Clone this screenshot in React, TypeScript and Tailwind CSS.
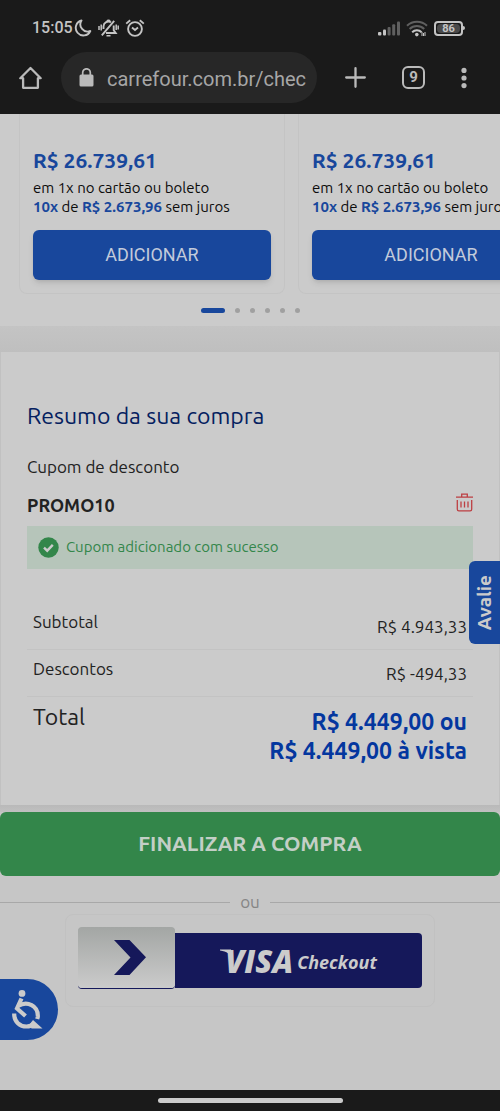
import clsx from "clsx";

const offers = [
  { id: 1, price: "R$ 26.739,61", installment: "R$ 2.673,96" },
  { id: 2, price: "R$ 26.739,61", installment: "R$ 2.673,96" },
];

const summary = [
  { label: "Subtotal", value: "R$ 4.943,33" },
  { label: "Descontos", value: "R$ -494,33" },
];

function StatusBar() {
  return (
    <div className="flex h-[52px] items-center justify-between pt-1 pr-[35px] pl-8 text-[#c4c4c4]">
      <div className="flex items-center">
        <span className="w-[42px] font-['Roboto',sans-serif] text-base font-medium">
          15:05
        </span>
        <svg width="18" height="18" viewBox="0 0 18 18" fill="none" stroke="currentColor" strokeWidth="1.9" strokeLinejoin="round">
          <path d="M7.5 1.5A7.6 7.6 0 1 0 16.3 12 7.2 7.2 0 0 1 7.5 1.5z" />
        </svg>
        <svg className="ml-1.5" width="21" height="18" viewBox="0 0 21 18" fill="none" stroke="currentColor" strokeWidth="1.9">
          <path d="M5.5 10V7.2A5 5 0 0 1 13 3.2M15.7 6.5v4.7l2 2.8H8" />
          <path d="M9.2 2.4a1.4 1.4 0 0 1 2.6 0M3.8 16.4L16.2 1.8" />
          <path d="M8.5 16.8h4M1 7v4M3.2 5.5v6M18.2 5.5v5.5M20.2 6.5v4" strokeWidth="1.5" />
        </svg>
        <svg className="ml-[6px]" width="20" height="18" viewBox="0 0 20 18" fill="none" stroke="currentColor" strokeWidth="1.9">
          <circle cx="10" cy="10" r="6.9" />
          <path d="M1.2 4.6L5.2 1.2M18.8 4.6l-4-3.4M7 8.6l3 2.4 3-2.4" />
        </svg>
      </div>
      <div className="flex items-center">
        <svg width="23" height="15" viewBox="0 0 23 15">
          <g fill="#c4c4c4">
            <rect x="0" y="11" width="3.4" height="3.4" rx="1" />
            <rect x="5" y="8.6" width="3" height="5.8" rx="1" />
          </g>
          <g fill="#606060">
            <rect x="9.6" y="6" width="3" height="8.4" rx="1" />
            <rect x="14.2" y="3.2" width="3" height="11.2" rx="1" />
            <rect x="19" y="0.4" width="3" height="14" rx="1" />
          </g>
        </svg>
        <svg className="ml-[5px]" width="22" height="17" viewBox="0 0 22 17" fill="none" strokeWidth="2">
          <g stroke="#606060">
            <path d="M1 5.8a14.4 14.4 0 0 1 20 0" />
            <path d="M3.6 9a10.4 10.4 0 0 1 14.6 0" />
          </g>
          <path d="M6.2 12.2a6.6 6.6 0 0 1 9.4 0" stroke="#c4c4c4" />
          <circle cx="10.8" cy="14.6" r="1.8" fill="#c4c4c4" />
          <path d="M16 12v4M19 12v4M17.5 13v3" stroke="#c4c4c4" strokeWidth="1" />
        </svg>
        <span className="ml-[6px] flex h-[15px] w-[29px] items-center justify-center rounded border-2 border-[#c4c4c4] p-px">
          <span className="w-full rounded-sm bg-[#4a4a4a] text-center font-['Roboto',sans-serif] text-[11px] leading-[9px] font-bold">
            86
          </span>
        </span>
        <span className="h-1 w-0.5 rounded-r bg-[#c4c4c4]" />
      </div>
    </div>
  );
}

function AddressBar() {
  return (
    <div className="flex items-center pr-[33px] pb-[11px] pl-[19px] text-[#bababa]">
      <button type="button" aria-label="Página inicial">
        <svg width="23" height="24" viewBox="0 0 23 24" fill="none" stroke="currentColor" strokeWidth="2.3" strokeLinejoin="round">
          <path d="M11.5 2L1.3 12.2h2.8v9.6h14.8v-9.6h2.8z" />
        </svg>
      </button>
      <div className="ml-[19px] flex h-[51px] min-w-0 flex-1 items-center rounded-full bg-[#272727] pr-[11px] pl-[18px]">
        <svg className="shrink-0" width="15" height="19" viewBox="0 0 15 19" fill="none">
          <rect x="0.5" y="6.5" width="14" height="12" rx="1.5" fill="#bababa" />
          <path d="M3.7 7V4.6a3.8 3.8 0 0 1 7.6 0V7" stroke="#bababa" strokeWidth="1.7" />
        </svg>
        <input
          type="text"
          aria-label="Endereço"
          defaultValue="carrefour.com.br/checkout"
          className="ml-[13px] min-w-0 flex-1 bg-transparent pt-0.5 font-['Roboto',sans-serif] text-xl text-[#a6a6a6] outline-none"
        />
      </div>
      <button type="button" aria-label="Nova aba" className="ml-7">
        <svg width="21" height="21" viewBox="0 0 21 21" stroke="currentColor" strokeWidth="2.3" strokeLinecap="round">
          <path d="M10.5 1.2v18.6M1.2 10.5h18.6" />
        </svg>
      </button>
      <button
        type="button"
        aria-label="9 abas"
        className="ml-9 h-[23px] w-[23px] rounded-md border-2 border-[#bababa] font-['Roboto',sans-serif] text-[15px] leading-[19px] font-bold"
      >
        9
      </button>
      <button type="button" aria-label="Menu" className="ml-9">
        <svg width="6" height="22" viewBox="0 0 6 22" fill="currentColor">
          <circle cx="3" cy="3.4" r="2.6" />
          <circle cx="3" cy="11" r="2.6" />
          <circle cx="3" cy="18.6" r="2.6" />
        </svg>
      </button>
    </div>
  );
}

function Offers() {
  return (
    <section className="bg-[#cbcbcb] pb-[13px]">
      <div className="flex gap-[13px] overflow-hidden pl-[19px]">
        {offers.map((offer) => (
          <article
            key={offer.id}
            className="w-[266px] shrink-0 rounded-b-lg border border-t-0 border-[#c4c4c4] px-[13px] pt-8 pb-[13px] whitespace-nowrap"
          >
            <p className="text-[21px] leading-7 font-bold text-[#18479c]">
              {offer.price}
            </p>
            <p className="mt-1 text-[15px] leading-[19px] text-[#0c0c0c]">
              em 1x no cartão ou boleto
            </p>
            <p className="text-[15px] leading-[19px] text-[#0c0c0c]">
              <b className="font-bold text-[#18479c]">10x</b> de{" "}
              <b className="font-bold text-[#18479c]">{offer.installment}</b>{" "}
              sem juros
            </p>
            <button
              type="button"
              className="mt-3.5 h-[50px] w-full rounded-md bg-[#18479c] font-['Roboto',sans-serif] text-lg text-[#c3cbdb] shadow-md"
            >
              ADICIONAR
            </button>
          </article>
        ))}
      </div>
      <div className="mt-3.5 flex items-center justify-center gap-2.5">
        {[0, 1, 2, 3, 4, 5].map((page) => (
          <button
            key={page}
            type="button"
            aria-label={`Página ${page + 1}`}
            className={clsx(
              "h-[5px] rounded-full",
              page === 0 ? "w-6 bg-[#18479c]" : "w-[5px] bg-[#a0a0a0]"
            )}
          />
        ))}
      </div>
    </section>
  );
}

function Summary() {
  return (
    <section className="border-x border-[#c1c1c1] bg-[#cbcbcb] px-[26px] pt-12 pb-10 text-[#222]">
      <h2 className="text-[23px] leading-8 text-[#04205f]">
        Resumo da sua compra
      </h2>
      <p className="mt-[23px] text-[17px] leading-6">Cupom de desconto</p>
      <div className="mt-2.5 flex items-start justify-between">
        <strong className="pt-1 text-lg leading-6 font-bold">PROMO10</strong>
        <button type="button" aria-label="Remover cupom" className="pt-1">
          <svg width="17" height="19" viewBox="0 0 17 19" fill="none" stroke="#bd3f43" strokeWidth="1.3">
            <path d="M0 4.2h17M5.7 4V1.2h5.6V4M1.3 7v9.2a1.6 1.6 0 0 0 1.6 1.6h11.2a1.6 1.6 0 0 0 1.6-1.6V7" />
            <path d="M5 8.5v6M8.5 8.5v6M12 8.5v6" />
          </svg>
        </button>
      </div>
      <p className="mt-[9px] flex h-[43px] items-center gap-[7px] bg-[#b6c5ba] pl-[11px] text-[15px] text-[#33864a]">
        <svg width="21" height="21" viewBox="0 0 21 21">
          <circle cx="10.5" cy="10.5" r="10.2" fill="#33864a" />
          <path d="M6 10.7l3.2 3 5.6-5.8" fill="none" stroke="#cbcbcb" strokeWidth="2.4" />
        </svg>
        Cupom adicionado com sucesso
      </p>
      <table className="mt-[34px] w-full">
        <tbody>
          {summary.map((row) => (
            <tr key={row.label} className="border-b border-[#c3c3c3]">
              <th scope="row" className="px-1.5 pt-[7px] pb-3 text-left align-top text-[17px] leading-6 font-normal">
                {row.label}
              </th>
              <td className="px-1.5 pt-3 pb-2.5 text-right text-[17px] leading-6">
                {row.value}
              </td>
            </tr>
          ))}
          <tr>
            <th scope="row" className="px-1.5 pt-1 text-left align-top text-[23px] leading-8 font-normal">
              Total
            </th>
            <td className="px-1.5 pt-2.5 text-right text-[23px] leading-[29px] font-bold text-[#04379f]">
              R$ 4.449,00 ou
              <br />
              R$ 4.449,00 à vista
            </td>
          </tr>
        </tbody>
      </table>
    </section>
  );
}

function VisaCheckout() {
  return (
    <div className="mx-[65px] rounded-lg border border-[#c1c1c1] px-3 pt-3 pb-[18px]">
      <button
        type="button"
        aria-label="Visa Checkout"
        className="flex w-full items-end text-[#cbcbcb]"
      >
        <span className="z-10 flex h-[61px] w-[97px] items-center justify-center rounded bg-linear-to-b from-[#a3a6a4] to-[#cbcbcb] pl-1.5 shadow-[0_1px_0_#15185a]">
          <svg width="32" height="35" viewBox="0 0 32 35" fill="#15185a">
            <path d="M0 0h15.5L32 17.2 15.5 35H0l16.5-17.5z" />
          </svg>
        </span>
        <span className="flex h-[55px] flex-1 items-center justify-center rounded-r bg-[#15185a]">
          <svg width="13" height="23" viewBox="0 0 13 23" fill="#cbcbcb">
            <path d="M0 .5h11l2 9C10 5 7 2.5 0 1.5z" />
          </svg>
          <span className="-ml-2 font-['Open_Sans',sans-serif] text-[31px] leading-8 font-extrabold italic">
            VISA
          </span>
          <span className="ml-1 pt-0.5 font-['Open_Sans',sans-serif] text-lg leading-6 font-bold italic">
            Checkout
          </span>
        </span>
      </button>
    </div>
  );
}

export default function App() {
  return (
    <div className="relative flex min-h-screen flex-col overflow-hidden bg-[#c6c6c6] font-['Ubuntu','Noto_Sans',sans-serif]">
      <header className="bg-[#1a1a1a]">
        <StatusBar />
        <AddressBar />
      </header>
      <main className="flex-1">
        <Offers />
        <div className="h-[26px] bg-linear-to-b from-[#c4c4c4] to-[#bfbfbf]" />
        <Summary />
        <div className="h-[7px] bg-linear-to-b from-[#b9b9b9] to-[#c0c0c0]" />
        <button
          type="button"
          className="h-16 w-full rounded-md bg-[#33864a] text-[21px] font-bold text-[#c3cfc6]"
        >
          FINALIZAR A COMPRA
        </button>
        <div className="flex h-[38px] items-center gap-2.5 pt-3.5 text-[17px] leading-6 text-[#858585]">
          <span className="h-px flex-1 bg-[#a8a8a8]" />
          ou
          <span className="h-px flex-1 bg-[#a8a8a8]" />
        </div>
        <VisaCheckout />
      </main>
      <footer className="flex h-[21px] items-center justify-center bg-[#1a1a1a]">
        <span className="h-[5px] w-[185px] rounded-full bg-[#cbcbcb]" />
      </footer>

      <button
        type="button"
        className="absolute top-[561px] right-0 flex h-[83px] w-[31px] items-center justify-center rounded-l-md bg-[#18479c] text-[19px] font-bold text-[#cbcbcb]"
      >
        <span className="rotate-180 [writing-mode:vertical-rl]">Avalie</span>
      </button>
      <button
        type="button"
        aria-label="Acessibilidade"
        className="absolute bottom-[71px] left-0 flex h-[61px] w-[58px] items-center rounded-r-full bg-[#18479c] pl-3"
      >
        <svg width="31" height="39" viewBox="0 0 31 39" fill="none" stroke="#cbcbcb" strokeWidth="4.2">
          <circle cx="10" cy="3.4" r="3.4" fill="#cbcbcb" stroke="none" />
          <path d="M9.5 8.5L5 18.5l8.5 7.5" />
          <path d="M6.5 15.8C15 10.5 26.5 15.500 25.800 27l-.6 2" />
          <path d="M2.200 23.500C2 32 8 36.500 14.500 36.500c3 0 5.500-1 7.500-3" />
          <path d="M21 30l9.500 8.500H19.500l-2-4z" fill="#cbcbcb" stroke="none" />
        </svg>
      </button>
    </div>
  );
}
